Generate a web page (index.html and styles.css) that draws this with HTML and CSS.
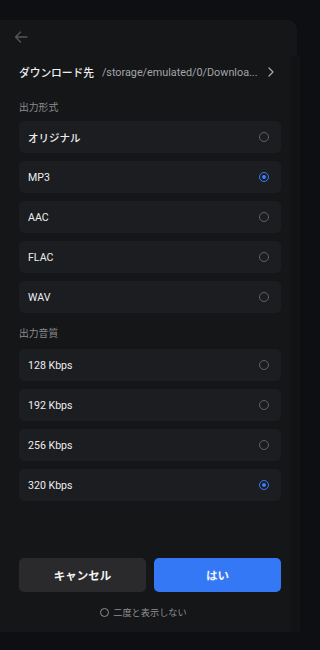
FILE: index.html
```html
<!DOCTYPE html>
<html lang="ja">
<head>
<meta charset="utf-8">
<link rel="stylesheet" href="styles.css">
</head>
<body>
<div class="sheet">
  <div class="topbar">
    <svg class="back" width="14" height="12" viewBox="0 0 14 12"><path d="M13 6H1.5M6.5 1L1.5 6L6.5 11" fill="none" stroke="#55575b" stroke-width="1.3" stroke-linecap="round" stroke-linejoin="round"/></svg>
  </div>
  <div class="dest">
    <span class="dest-label">ダウンロード先</span>
    <span class="dest-path">/storage/emulated/0/Downloa...</span>
    <svg class="chev" width="6" height="10" viewBox="0 0 6 10"><path d="M1 1L5 5L1 9" fill="none" stroke="#a9aaad" stroke-width="1.2" stroke-linecap="round" stroke-linejoin="round"/></svg>
  </div>
  <div class="label first">出力形式</div>
  <div class="list">
    <div class="item"><span class="jp">オリジナル</span><span class="radio"></span></div>
    <div class="item"><span>MP3</span><span class="radio on"></span></div>
    <div class="item"><span>AAC</span><span class="radio"></span></div>
    <div class="item"><span>FLAC</span><span class="radio"></span></div>
    <div class="item"><span>WAV</span><span class="radio"></span></div>
  </div>
  <div class="label second">出力音質</div>
  <div class="list">
    <div class="item"><span>128 Kbps</span><span class="radio"></span></div>
    <div class="item"><span>192 Kbps</span><span class="radio"></span></div>
    <div class="item"><span>256 Kbps</span><span class="radio"></span></div>
    <div class="item"><span>320 Kbps</span><span class="radio on"></span></div>
  </div>
  <div class="spacer"></div>
  <div class="buttons">
    <button class="btn cancel">キャンセル</button>
    <button class="btn ok">はい</button>
  </div>
  <div class="dontshow"><span class="circle"></span><span>二度と表示しない</span></div>
  <div class="edge"></div>
</div>
</body>
</html>
```
FILE: styles.css
```css
html, body {
  margin: 0;
  padding: 0;
  background: #0d0f12;
  height: 650px;
  overflow: hidden;
}
body {
  font-family: Roboto, "Noto Sans CJK JP", sans-serif;
  color: #e6e6e8;
}
.sheet {
  position: relative;
  margin-top: 20px;
  width: 297px;
  height: 612px;
  box-sizing: border-box;
  padding: 0 16px 0 19px;
  background: #151618;
  border-radius: 0 9px 0 0;
  display: flex;
  flex-direction: column;
}
.edge {
  position: absolute;
  right: -3px;
  top: 36px;
  width: 10px;
  bottom: 0;
  background: #121315;
  border-radius: 4px 0 0 0;
}
.topbar {
  height: 34px;
  display: flex;
  align-items: center;
}
.back {
  margin-left: -5px;
}
.dest {
  margin-top: 8px;
  height: 20px;
  display: flex;
  align-items: center;
}
.dest-label {
  font-family: "Noto Sans CJK JP", sans-serif;
  font-size: 10.8px;
  font-weight: 500;
  color: #eeeeef;
  letter-spacing: -0.1px;
}
.dest-path {
  margin-left: 8px;
  font-size: 10.8px;
  color: #a4a5a8;
  flex: 1;
  white-space: nowrap;
}
.chev {
  margin-right: 7px;
}
.label {
  font-family: "Noto Sans CJK JP", sans-serif;
  font-size: 9.8px;
  color: #8b8c8f;
  height: 14px;
  line-height: 14px;
}
.label.first {
  margin-top: 18px;
  margin-bottom: 7px;
}
.label.second {
  margin-top: 13px;
  margin-bottom: 9px;
}
.list {
  display: flex;
  flex-direction: column;
  gap: 8px;
  position: relative;
  z-index: 1;
}
.item {
  height: 32px;
  background: #1c1d20;
  border-radius: 5px;
  display: flex;
  align-items: center;
  justify-content: space-between;
  padding: 0 12px 0 9px;
  font-size: 10.6px;
  font-weight: 400;
  color: #ededef;
}
.item .jp {
  font-family: "Noto Sans CJK JP", sans-serif;
  font-size: 10.5px;
  font-weight: 500;
}
.radio {
  width: 10px;
  height: 10px;
  box-sizing: border-box;
  border: 1.3px solid #606164;
  border-radius: 50%;
  display: flex;
  align-items: center;
  justify-content: center;
}
.radio.on {
  border-color: #3b7cf7;
}
.radio.on::after {
  content: "";
  width: 4.5px;
  height: 4.5px;
  border-radius: 50%;
  background: #3b7cf7;
}
.spacer {
  flex: 1;
}
.buttons {
  display: flex;
  gap: 8px;
  position: relative;
  z-index: 1;
}
.btn {
  flex: 1;
  height: 34px;
  border: none;
  border-radius: 5px;
  font-family: "Noto Sans CJK JP", sans-serif;
  font-size: 11.5px;
  font-weight: 700;
  color: #f4f4f6;
  padding: 0;
}
.cancel {
  background: #2a2a2c;
}
.ok {
  background: #3478f6;
}
.dontshow {
  margin-top: 13px;
  margin-bottom: 13px;
  padding-right: 13px;
  height: 14px;
  display: flex;
  align-items: center;
  justify-content: center;
  gap: 4px;
  font-family: "Noto Sans CJK JP", sans-serif;
  font-size: 9.2px;
  color: #8e8f92;
  position: relative;
  z-index: 1;
}
.circle {
  width: 9px;
  height: 9px;
  box-sizing: border-box;
  border: 1.1px solid #8e8f92;
  border-radius: 50%;
}
```
